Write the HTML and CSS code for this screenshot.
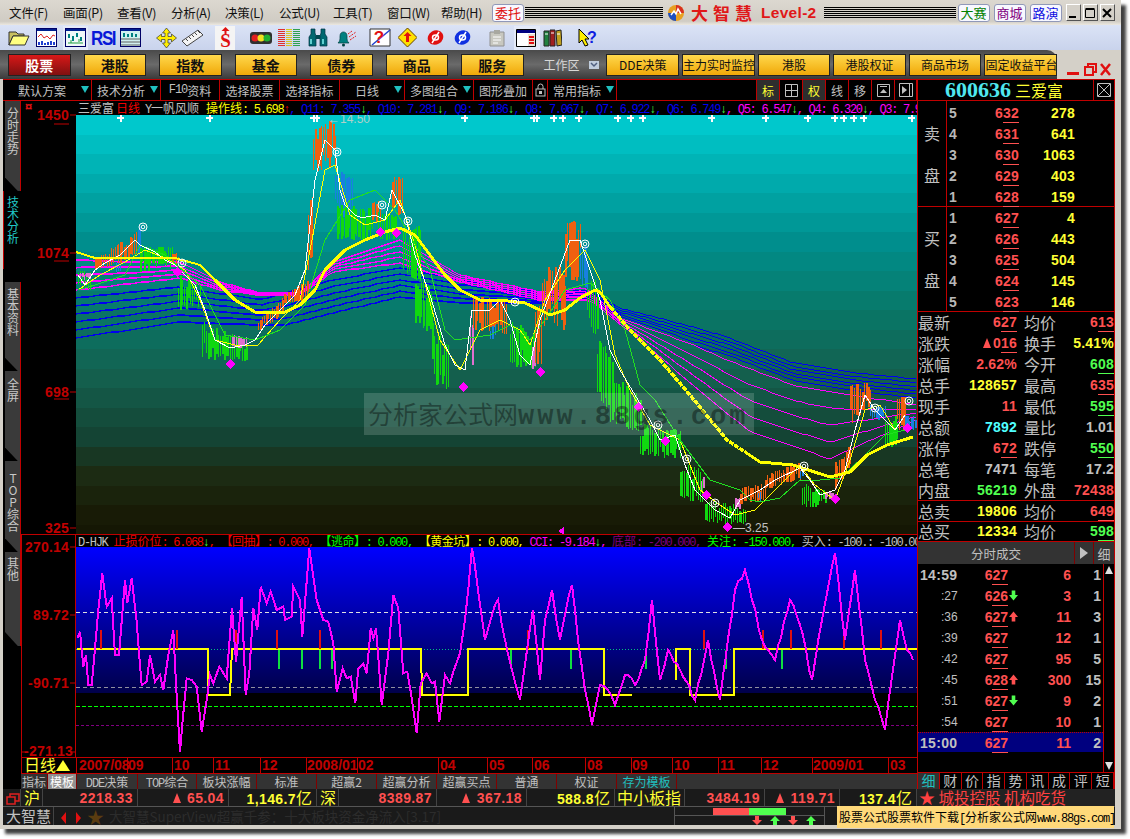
FILE: index.html
```html
<!DOCTYPE html>
<html lang="zh">
<head>
<meta charset="utf-8">
<title>大智慧 Level-2</title>
<link rel="stylesheet" href="styles.css">
</head>
<body>
<div class="window">
  <header class="menubar">
    <nav class="menus">
      <span>文件(F)</span><span>画面(P)</span><span>查看(V)</span><span>分析(A)</span><span>决策(L)</span><span>公式(U)</span><span>工具(T)</span><span>窗口(W)</span><span>帮助(H)</span>
    </nav>
    <button class="pill red-t entrust">委托</button>
    <div class="stripes s1"></div>
    <svg class="logo" width="18" height="18" viewBox="0 0 18 18"><circle cx="9" cy="9" r="8" fill="#e8a020"/><path d="M9 1a8 8 0 0 1 8 8H9z" fill="#d83020"/><path d="M1 9a8 8 0 0 0 8 8V9z" fill="#2050c0"/><path d="M4 11l3-4 2 3 2-5 3 5" fill="none" stroke="#fff" stroke-width="1.5"/></svg>
    <span class="brand">大智慧</span><span class="brand2">Level-2</span>
    <div class="stripes s2"></div>
    <button class="pill green-t">大赛</button><button class="pill purple-t">商城</button><button class="pill blue-t">路演</button>
    <div class="winbtns">
      <span class="wb"><svg width="12" height="12" viewBox="0 0 12 12"><rect x="2" y="9" width="7" height="2"/></svg></span>
      <span class="wb"><svg width="12" height="12" viewBox="0 0 12 12"><path d="M1.5 2.5h9v8h-9zM1.5 1.500h9" fill="none" stroke="#000"/></svg></span>
      <span class="wb"><svg width="12" height="12" viewBox="0 0 12 12"><path d="M2 2l8 8M10 2l-8 8" stroke="#000" stroke-width="2"/></svg></span>
    </div>
  </header>

  <div class="toolbar">
    <span class="t"><svg width="22" height="19" viewBox="0 0 22 19"><path d="M1 4h7l2 2h6v2H5L1 17z" fill="#c8c060" stroke="#333"/><path d="M5 8h16l-4 9H1z" fill="#ffff80" stroke="#333"/></svg></span>
    <span class="t"><svg width="21" height="19" viewBox="0 0 21 19"><rect x=".5" y=".5" width="20" height="18" fill="#fff" stroke="#006"/><rect x="1" y="1" width="19" height="2" fill="#002090"/><path d="M2 9l3-3 3 4 3-2 3 3 3-4 2 1" fill="none" stroke="#e02020"/><path d="M3 17v-3M6 17v-4M9 17v-2M12 17v-3M15 17v-4M18 17v-3" stroke="#2040d0" stroke-width="2"/></svg></span>
    <span class="t sel"><svg width="21" height="19" viewBox="0 0 21 19"><rect x=".5" y=".5" width="20" height="18" fill="#f0f8f8" stroke="#006"/><rect x="1" y="1" width="19" height="2" fill="#002090"/><path d="M4 6v4M8 8v5M12 5v4M16 9v4" stroke="#008080" stroke-width="2"/><path d="M3 15h15M6 12v3M14 11v3" stroke="#20a040"/></svg></span>
    <span class="t rsi">RSI</span>
    <span class="t"><svg width="21" height="19" viewBox="0 0 21 19"><rect x=".5" y=".5" width="20" height="18" fill="#d0f0f0" stroke="#006"/><rect x="1" y="1" width="19" height="2" fill="#002090"/><path d="M4 5v4M8 6v3M12 5v4M16 6v3" stroke="#008080" stroke-width="2"/><path d="M1 11h19M1 14h19M1 17h19" stroke="#606060"/></svg></span>
    <span class="t"><svg width="21" height="20" viewBox="0 0 21 20"><path d="M10.500 0l4 5h-2.500v3.500h3.500V6l5 4-5 4v-2.500h-3.500V15H14.500l-4 5-4-5h2.500v-3.500H5.500V14l-5-4 5-4v2.500h3.500V5H6.500z" fill="#ffee00" stroke="#333" stroke-width=".7"/></svg></span>
    <span class="t"><svg width="23" height="19" viewBox="0 0 23 19"><path d="M1 13L17 2l5 5L6 18z" fill="#f4f4f4" stroke="#444"/><path d="M5 11l2 2M8 9l2 2M11 7l2 2M14 5l2 2M17 3l2 2" stroke="#444"/></svg></span>
    <span class="t sel-s"><svg width="17" height="21" viewBox="0 0 17 21"><path d="M8.500 0l4 4h-3v3h-2V4h-3z" fill="#e01010"/><text x="8.500" y="20" text-anchor="middle" class="icon-s">S</text></svg></span>
    <span class="t"><svg width="22" height="14" viewBox="0 0 22 14"><rect x="0" y="1" width="22" height="12" rx="3" fill="#303030"/><circle cx="5" cy="7" r="3.500" fill="#e02020"/><circle cx="11" cy="7" r="3.500" fill="#f0e020"/><circle cx="17" cy="7" r="3.500" fill="#20b030"/></svg></span>
    <span class="t"><svg width="22" height="18" viewBox="0 0 22 18"><path d="M3.500 0v18" stroke="#e03030" stroke-width="7" stroke-dasharray="1 1"/><path d="M11 0v18" stroke="#d8c820" stroke-width="6" stroke-dasharray="1 1"/><path d="M18.500 0v18" stroke="#30a050" stroke-width="7" stroke-dasharray="1 1"/></svg></span>
    <span class="t"><svg width="20" height="19" viewBox="0 0 20 19"><path d="M3 1h4v4l1 3v10H1V9l2-3zM13 1h4v5l2 3v9h-7V8l1-3z" fill="#006870" stroke="#003040" stroke-width=".7"/><path d="M8 7h4v4H8z" fill="#004850"/><path d="M3 11v5M15 11v5" stroke="#60d0d0" stroke-width="2"/></svg></span>
    <span class="t"><svg width="21" height="19" viewBox="0 0 21 19"><path d="M1 15c2-2 2-3 2-7 0-3 2-4 3.500-4S10 5 10 8c0 4 0 5 2 7z" fill="#008080" stroke="#004040" stroke-width=".7"/><circle cx="6.500" cy="17" r="1.500" fill="#004040"/><path d="M11 6l4-3M12 9l7-5M13 12l6-4" stroke="#e02020" stroke-dasharray="2 1"/></svg></span>
    <span class="t"><svg width="22" height="19" viewBox="0 0 22 19"><path d="M1 1h20v17H1z" fill="#fff" stroke="#333"/><path d="M3 17L21 2" stroke="#2040d0" stroke-width="1.500"/><text x="10" y="15" text-anchor="middle" class="icon-q">?</text></svg></span>
    <span class="t"><svg width="19" height="19" viewBox="0 0 19 19"><path d="M9.500 0L19 9.500 9.500 19 0 9.500z" fill="#ffe000" stroke="#604000"/><path d="M9.500 4l4 4h-2.500v6H8V8H5.500z" fill="#e01010"/></svg></span>
    <span class="t"><svg width="17" height="17" viewBox="0 0 17 17"><ellipse cx="8.500" cy="8.500" rx="8" ry="7" transform="rotate(-30 8.500 8.500)" fill="#e01010"/><path d="M5 14L12 3" stroke="#fff" stroke-width="1.500"/><ellipse cx="8.500" cy="8.500" rx="3" ry="2.500" fill="none" stroke="#fff" stroke-width="1.500"/></svg></span>
    <span class="t"><svg width="17" height="17" viewBox="0 0 17 17"><ellipse cx="8.500" cy="8.500" rx="8" ry="7" transform="rotate(-30 8.500 8.500)" fill="#1030e0"/><path d="M5 14L12 3" stroke="#fff" stroke-width="1.500"/><ellipse cx="8.500" cy="8.500" rx="3" ry="2.500" fill="none" stroke="#fff" stroke-width="1.500"/></svg></span>
    <span class="t"><svg width="18" height="18" viewBox="0 0 18 18"><path d="M2 3h14v14H2z" fill="#c8c8c0" stroke="#909090"/><path d="M6 1h6v4H6z" fill="#a8a8a0"/><path d="M5 8h8M5 11h8M5 14h5" stroke="#fff"/></svg></span>
    <span class="t sel"><svg width="20" height="18" viewBox="0 0 20 18"><path d="M.5.5h19v17H.5z" fill="#fff" stroke="#000"/><rect x="1" y="1" width="18" height="3" fill="#000080"/><rect x="12" y="5" width="7" height="12" fill="#e8e0d0"/><path d="M13 8h5M13 11h5M13 14h5" stroke="#e01010" stroke-width="2"/></svg></span>
    <span class="t"><svg width="19" height="19" viewBox="0 0 19 19"><path d="M1 3h5v15H1z" fill="#208040" stroke="#222"/><path d="M7 2h5v16H7z" fill="#a02020" stroke="#222"/><path d="M13 3l5-1 1 15-5 1z" fill="#c0a020" stroke="#222"/><path d="M2 6h3M8 5h3M14 6h3" stroke="#fff"/></svg></span>
    <span class="t help"><svg width="20" height="20" viewBox="0 0 20 20"><path d="M1 1l0 14 3-3 3 6 3-1-3-6h4z" fill="#ffee00" stroke="#000"/><text x="14" y="15" text-anchor="middle" class="icon-h">?</text></svg></span>
  </div>

  <div class="navbar">
    <div class="navmain">
      <button class="nb active">股票</button><button class="nb">港股</button><button class="nb">指数</button><button class="nb">基金</button><button class="nb">债券</button><button class="nb">商品</button><button class="nb">服务</button>
    </div>
    <span class="wsp">工作区</span>
    <span class="wspbtn"><svg width="10" height="8" viewBox="0 0 10 8"><path d="M0 0h10v8H0z" fill="#c0ccdc"/><path d="M2 2l3 3 3-3" fill="none" stroke="#506080" stroke-width="1.500"/></svg></span>
    <div class="navwork">
      <button class="wb2">DDE决策</button><button class="wb2">主力实时监控</button><button class="wb2">港股</button><button class="wb2">港股权证</button><button class="wb2">商品市场</button><button class="wb2">固定收益平台</button>
    </div>
  </div>
  <div class="navctrl" aria-hidden="true">
    <svg width="46" height="18" viewBox="0 0 46 18"><rect x="1" y="11" width="12" height="3" fill="#e01010"/><path d="M19 6h8v8h-8zM22 6V3h8v8h-3" fill="none" stroke="#e01010" stroke-width="2"/><path d="M35 3l9 11M44 3l-9 11" stroke="#e01010" stroke-width="2.500"/></svg>
  </div>

  <div class="workspace">
    <section class="chartcol">
      <div class="toolrow">
        <span class="c w89 hastri">默认方案<em class="tri"></em></span>
        <span class="c w69 hastri">技术分析<em class="tri"></em></span>
        <span class="c w59"><span class="mono">F10</span>资料</span>
        <span class="c w60">选择股票</span>
        <span class="c w60">选择指标</span>
        <span class="c w65 hastri">日线<em class="tri"></em></span>
        <span class="c w69 hastri">多图组合<em class="tri"></em></span>
        <span class="c w59">图形叠加</span>
        <span class="c w15"><svg width="11" height="14" viewBox="0 0 11 14"><path d="M3 6V3.500a2.500 2.500 0 0 1 5 0V6" fill="none" stroke="#c0c0c0"/><rect x="1" y="6" width="9" height="7" fill="none" stroke="#c0c0c0"/><rect x="4" y="8" width="3" height="3" fill="#c0c0c0"/></svg></span>
        <span class="c w69 hastri">常用指标<em class="tri"></em></span>
        <span class="c fill"></span>
        <span class="c w23 on">标</span>
        <span class="c w23"><svg width="13" height="13" viewBox="0 0 13 13"><path d="M.5.5h12v12H.5zM6.500 1v11M1 6.500h11" fill="none" stroke="#c0c0c0"/></svg></span>
        <span class="c w23 on">权</span>
        <span class="c w23">线</span>
        <span class="c w23">移</span>
        <span class="c w23"><svg width="13" height="13" viewBox="0 0 13 13"><path d="M.5.5h12v12H.5z" fill="none" stroke="#c0c0c0"/><path d="M3 2.500h7" stroke="#c0c0c0"/><path d="M6.500 5l3.500 4H3z" fill="#c0c0c0"/></svg></span>
        <span class="c w22"><svg width="14" height="14" viewBox="0 0 14 14"><path d="M.5.5h13v13H.5z" fill="none" stroke="#c0c0c0"/><path d="M3 3l5 4-5 4z" fill="#c0c0c0"/><path d="M10.500 1v12" stroke="#c0c0c0"/></svg></span>
      </div>

      <div class="chartbody">
        <aside class="vtabs">
          <span class="vt h90">分时走势</span>
          <span class="vt h91 sel">技术分析</span>
          <span class="vt h89">基本资料</span>
          <span class="vt h90 full">全屏</span>
          <span class="vt h91 top">TOP综合</span>
          <span class="vt h94 other">其他</span>
        </aside>
        <div class="stack">
          <div class="panel price">
            <svg class="axis" viewBox="21 101 55 433">
              <text x="25" y="111" class="cur">¤</text>
              <text x="69" y="120" class="ax">1450</text><path d="M54 124h15M70 115h6" class="axl"/>
              <text x="69" y="258" class="ax">1074</text><path d="M54 261h15M70 253h6" class="axl"/>
              <text x="69" y="397" class="ax">698</text><path d="M54 399h15M70 392h6" class="axl"/>
              <text x="69" y="533" class="ax">325</text><path d="M70 528h6" class="axl"/>
            </svg>
            <div class="plot pp">
              <div class="head">
                <span class="gray cn">三爱富</span><span class="red cn ml2">日线</span><span class="gray lat ml5">Y</span><span class="gray cn">一帆风顺</span><span class="yel ml7"><span class="cn">操作线</span><span class="lat">: 5.698</span></span><span class="red lat">↑</span><span class="blu lat">, Q11: 7.355</span><span class="grn lat">↓</span><span class="blu lat">, Q10: 7.281</span><span class="grn lat">↓</span><span class="blu lat">, Q9: 7.186</span><span class="grn lat">↓</span><span class="blu lat">, Q8: 7.067</span><span class="grn lat">↓</span><span class="blu lat">, Q7: 6.922</span><span class="grn lat">↓</span><span class="blu lat">, Q6: 6.749</span><span class="grn lat">↓</span><span class="mag lat">, Q5: 6.547</span><span class="grn lat">↓</span><span class="mag lat">, Q4: 6.320</span><span class="grn lat">↓</span><span class="mag lat">, Q3: 7.9</span>
              </div>
              <svg id="price" class="chart" viewBox="76 115 841 419"></svg>
              <div class="watermark">分析家公式网<span class="wml">www.88gs.com</span></div>
            </div>
          </div>
          <div class="panel ind">
            <svg class="axis" viewBox="21 534 55 223">
              <path d="M21.500 534v223M21 534.500h55" class="axl"/>
              <text x="69" y="552" class="ax">270.14</text><path d="M70 547h6" class="axl"/>
              <text x="69" y="620" class="ax">89.72</text><path d="M70 615h6" class="axl"/>
              <text x="69" y="688" class="ax">-90.71</text><path d="M70 683h6" class="axl"/>
              <text x="73" y="756" class="ax">-271.13</text><path d="M21 752h4M70 752h6" class="axl"/>
            </svg>
            <div class="plot">
              <div class="head h2">
                <span class="gray lat">D-HJK </span><span class="red"><span class="cn">止损价位</span><span class="lat">: 6.068</span></span><span class="grn lat">↓</span><span class="red lat">, </span><span class="red cn brk">【回抽】</span><span class="red lat">: 0.000, </span><span class="grn2 cn brk">【逃命】</span><span class="grn2 lat">: 0.000, </span><span class="yel cn brk">【黄金坑】</span><span class="yel lat">: 0.000, </span><span class="mag lat">CCI: -9.184</span><span class="grn lat">↓</span><span class="mag lat">, </span><span class="pur"><span class="cn">底部</span><span class="lat">: -200.000, </span></span><span class="grn2"><span class="cn">关注</span><span class="lat">: -150.000, </span></span><span class="gray"><span class="cn">买入</span><span class="lat">: -100.: -100.000</span></span>
              </div>
              <svg id="ind" class="chart" viewBox="76 547 841 210"></svg>
            </div>
          </div>
          <svg class="timeaxis" viewBox="21 757 896 16">
            <text x="24" y="771" class="dayl">日线</text><path d="M56 771l7-11 7 11z" fill="#ffff33"/>
            <path class="axl" d="M21 757.500h896M21.500 757v16M76.500 757v16M127.500 757v16M172.500 757v16M213.500 757v16M260.500 757v16M306.500 757v16M357.500 757v16M438.500 757v16M487.500 757v16M532.500 757v16M585.500 757v16M631.500 757v16M672.500 757v16M718.500 757v16M761.500 757v16M812.500 757v16M888.500 757v16"/>
            <text x="79" y="770" class="tx">2007/08</text><text x="128" y="770" class="tx">09</text><text x="174" y="770" class="tx">10</text><text x="215" y="770" class="tx">11</text><text x="262" y="770" class="tx">12</text><text x="307" y="770" class="tx">2008/01</text><text x="358" y="770" class="tx">02</text><text x="440" y="770" class="tx">04</text><text x="489" y="770" class="tx">05</text><text x="534" y="770" class="tx">06</text><text x="587" y="770" class="tx">08</text><text x="632" y="770" class="tx">09</text><text x="674" y="770" class="tx">10</text><text x="720" y="770" class="tx">11</text><text x="763" y="770" class="tx">12</text><text x="813" y="770" class="tx">2009/01</text><text x="890" y="770" class="tx">03</text>
          </svg>
          <div class="btabs">
            <span class="bt w27">指标</span><span class="bt w29 act">模板</span><span class="bt w61"><span class="mono">DDE</span>决策</span><span class="bt w59"><span class="mono">TOP</span>综合</span><span class="bt w60">板块涨幅</span><span class="bt w60">标准</span><span class="bt w60">超赢2</span><span class="bt w60">超赢分析</span><span class="bt w60">超赢买点</span><span class="bt w60">普通</span><span class="bt w60">权证</span><span class="bt w60 cyan">存为模板</span><span class="bt rest"></span>
          </div>
        </div>
      </div>
    </section>

    <aside class="side">
      <div class="quotehead"><span class="code">600636</span><span class="sname">三爱富</span><span class="closebox"><svg width="14" height="14" viewBox="0 0 14 14"><path d="M.5.5h13v13H.5zM1 1l12 12M13 1L1 13" fill="none" stroke="#c0c0c0"/></svg></span></div>
      <div class="book sell">
        <div class="blabel"><span>卖</span><span>盘</span></div>
        <div class="brows">
          <div class="br"><span class="idx">5</span><span class="r">6<u>32</u></span><span class="y">278</span></div>
          <div class="br"><span class="idx">4</span><span class="r">6<u>31</u></span><span class="y">641</span></div>
          <div class="br"><span class="idx">3</span><span class="r">6<u>30</u></span><span class="y">1063</span></div>
          <div class="br"><span class="idx">2</span><span class="r">6<u>29</u></span><span class="y">403</span></div>
          <div class="br"><span class="idx">1</span><span class="r">6<u>28</u></span><span class="y">159</span></div>
        </div>
      </div>
      <div class="book buy">
        <div class="blabel"><span>买</span><span>盘</span></div>
        <div class="brows">
          <div class="br"><span class="idx">1</span><span class="r">6<u>27</u></span><span class="y">4</span></div>
          <div class="br"><span class="idx">2</span><span class="r">6<u>26</u></span><span class="y">443</span></div>
          <div class="br"><span class="idx">3</span><span class="r">6<u>25</u></span><span class="y">504</span></div>
          <div class="br"><span class="idx">4</span><span class="r">6<u>24</u></span><span class="y">145</span></div>
          <div class="br"><span class="idx">5</span><span class="r">6<u>23</u></span><span class="y">146</span></div>
        </div>
      </div>
      <div class="stats">
        <div class="st"><label>最新</label><span class="r">6<u>27</u></span><label>均价</label><span class="r">6<u>13</u></span></div>
        <div class="st"><label>涨跌</label><span class="r"><span class="upt"></span>0<u>16</u></span><label>换手</label><span class="y">5.41%</span></div>
        <div class="st"><label>涨幅</label><span class="r">2.62%</span><label>今开</label><span class="g">6<u>08</u></span></div>
        <div class="st"><label>总手</label><span class="y">128657</span><label>最高</label><span class="r">6<u>35</u></span></div>
        <div class="st"><label>现手</label><span class="r">11</span><label>最低</label><span class="g">5<u>95</u></span></div>
        <div class="st"><label>总额</label><span class="cy">7892</span><label>量比</label><span class="w">1.01</span></div>
        <div class="st"><label>涨停</label><span class="r">6<u>72</u></span><label>跌停</label><span class="g">5<u>50</u></span></div>
        <div class="st"><label>总笔</label><span class="w">7471</span><label>每笔</label><span class="w">17.2</span></div>
        <div class="st"><label>内盘</label><span class="g">56219</span><label>外盘</label><span class="r">72438</span></div>
      </div>
      <div class="st tot"><label>总卖</label><span class="y">19806</span><label>均价</label><span class="r">6<u>49</u></span></div>
      <div class="st tot t2"><label>总买</label><span class="y">12334</span><label>均价</label><span class="g">5<u>98</u></span></div>
      <div class="tickhead"><span class="thname">分时成交</span><span class="tharrow"><svg width="8" height="12" viewBox="0 0 8 12"><path d="M0 0l8 6-8 6z" fill="#c0c0c0"/></svg></span><span class="thd">细</span></div>
      <div class="tickwrap">
        <div class="ticks">
          <div class="tk"><span class="tm big">14:59</span><span class="r">6<u>27</u></span><span class="ar"></span><span class="r qty">6</span><span class="w n">1</span></div>
          <div class="tk"><span class="tm">:27</span><span class="r">6<u>26</u></span><span class="ar dn"><svg width="10" height="11" viewBox="0 0 10 11"><path d="M5 11L0 5h3V0h4v5h3z"/></svg></span><span class="r qty">3</span><span class="w n">1</span></div>
          <div class="tk"><span class="tm">:36</span><span class="r">6<u>27</u></span><span class="ar up"><svg width="10" height="11" viewBox="0 0 10 11"><path d="M5 0l5 6H7v5H3V6H0z"/></svg></span><span class="r qty">11</span><span class="w n">3</span></div>
          <div class="tk"><span class="tm">:39</span><span class="r">6<u>27</u></span><span class="ar"></span><span class="r qty">12</span><span class="w n">1</span></div>
          <div class="tk"><span class="tm">:42</span><span class="r">6<u>27</u></span><span class="ar"></span><span class="r qty">95</span><span class="w n">5</span></div>
          <div class="tk"><span class="tm">:45</span><span class="r">6<u>28</u></span><span class="ar up"><svg width="10" height="11" viewBox="0 0 10 11"><path d="M5 0l5 6H7v5H3V6H0z"/></svg></span><span class="r qty">300</span><span class="w n">15</span></div>
          <div class="tk"><span class="tm">:51</span><span class="r">6<u>27</u></span><span class="ar dn"><svg width="10" height="11" viewBox="0 0 10 11"><path d="M5 11L0 5h3V0h4v5h3z"/></svg></span><span class="r qty">9</span><span class="w n">2</span></div>
          <div class="tk"><span class="tm">:54</span><span class="r">6<u>27</u></span><span class="ar"></span><span class="r qty">10</span><span class="w n">1</span></div>
          <div class="tk hi"><span class="tm big">15:00</span><span class="r">6<u>27</u></span><span class="ar"></span><span class="r qty">11</span><span class="w n">2</span></div>
        </div>
        <div class="scroll"><span class="sb up1"></span><span class="sb dn1"></span></div>
      </div>
      <div class="sidetabs"><span class="stb on">细</span><span class="stb">财</span><span class="stb">价</span><span class="stb">指</span><span class="stb">势</span><span class="stb">讯</span><span class="stb">成</span><span class="stb">评</span><span class="stb">短</span></div>
    </aside>
  </div>

  <div class="market">
    <span class="mk m18"><svg width="14" height="12" viewBox="0 0 14 12"><path d="M1 4h8v7H1zM4 4V1h9v7H9" fill="none" stroke="#e02020" stroke-width="1.500"/></svg></span>
    <span class="mk m22 cnl">沪</span>
    <span class="mk m95 r">2218.33</span>
    <span class="mk m91 r"><span class="upt"></span> 65.04</span>
    <span class="mk m88 y">1,146.7<span class="cnl">亿</span></span>
    <span class="mk m22 cnl">深</span>
    <span class="mk m98 r">8389.87</span>
    <span class="mk m90 r"><span class="upt"></span> 367.18</span>
    <span class="mk m88 y">588.8<span class="cnl">亿</span></span>
    <span class="mk m70 cnl">中小板指</span>
    <span class="mk m80 r">3484.19</span>
    <span class="mk m75 r"><span class="upt"></span> 119.71</span>
    <span class="mk m77 y">137.4<span class="cnl">亿</span></span>
    <span class="mk hot"><span class="hstar">★</span> 城投控股 机构吃货</span>
  </div>
  <div class="ticker">
    <span class="dzh">大智慧</span>
    <span class="tarrows"><svg width="24" height="12" viewBox="0 0 24 12"><path d="M7 0L2 6l5 6zM17 0l5 6-5 6z" fill="#e01010"/></svg></span>
    <span class="dstar">★</span>
    <span class="news">大智慧SuperView超赢千参：十大板块资金净流入[3.17]</span>
    <div class="flow">
      <div class="fbar"><span class="fr"></span><span class="fg"></span></div>
      <svg class="farrows" width="70" height="9" viewBox="0 0 70 9"><path d="M5 9L0 4h3V0h4v4h3z" fill="#ff5050"/><path d="M23 0l5 5h-3v4h-4V5h-3z" fill="#50ff50"/><path d="M41 9l-5-5h3V0h4v4h3z" fill="#ff5050"/><path d="M59 0l5 5h-3v4h-4V5h-3z" fill="#50ff50"/></svg>
    </div>
    <div class="tip">股票公式股票软件下载<span class="lat">[</span>分析家公式网<span class="lat">www.88gs.com]</span></div>
  </div>
</div>
<script src="chart.js"></script>
</body>
</html>
```
FILE: styles.css
```css
* { box-sizing: border-box; }
html, body { margin: 0; padding: 0; background: #fff; }
body { width: 1130px; height: 839px; overflow: hidden; font-family: "Noto Sans CJK SC", sans-serif; }
button { font: inherit; padding: 0; cursor: default; }
u { text-decoration: none; border-bottom: 1px solid currentColor; padding-bottom: 1px; }

.window { position: relative; width: 1121px; height: 829px; background: #d4d0c8; padding: 0 6px 4px 3px; box-shadow: 5px 5px 3px rgba(0,0,0,.75); }

/* title bar */
.menubar { display: flex; align-items: center; height: 25px; margin: 0 -6px 0 -3px; background: linear-gradient(#dcd8d0, #d0ccc4 85%, #ece8e0); }
.menus { display: flex; gap: 13px; padding-left: 9px; width: 492px; font-size: 12.5px; color: #111; white-space: nowrap; }
.menus span { width: 41px; letter-spacing: -.3px; }
.pill { height: 18px; width: 32px; margin-right: 4px; border: 1px solid #9098b8; border-radius: 3px; background: #f8f8ff; font-size: 13px; line-height: 15px; }
.entrust { margin-right: 0; }
.red-t { color: #e01010; }
.green-t { color: #008000; }
.purple-t { color: #800080; }
.blue-t { color: #1010e0; }
.stripes { height: 12px; background: repeating-linear-gradient(#000 0 1px, transparent 1px 2px); }
.s1 { width: 138px; margin-left: 1px; }
.s2 { width: 132px; margin: 0 2px 0 7px; }
.logo { margin: 0 6px 0 4px; }
.brand { color: #e01818; font-size: 17px; font-weight: 700; letter-spacing: 5px; width: 70px; white-space: nowrap; }
.brand2 { color: #e01818; font: 700 15.500px/1 "Liberation Sans", sans-serif; letter-spacing: .3px; }
.winbtns { display: flex; gap: 2px; }
.wb { display: flex; align-items: center; justify-content: center; width: 15px; height: 17px; background: #d4d0c8; border: 1px solid; border-color: #fff #555 #555 #fff; }

/* icon toolbar */
.toolbar { display: grid; grid-template-columns: 28px 29px 26px 29px 36px 25px 36px 33px 28px 30px 29px 32px 29px 29px 27px 34px 28px 27px 35px 20px; align-items: center; height: 25px; margin: 0 -6px 0 -3px; padding-left: 8px; background: linear-gradient(#dbe3f6, #c9d3ec); }
.t { display: flex; align-items: center; height: 24px; }
.sel { background: #e4eaf8; margin-left: -2px; padding-left: 2px; margin-right: 3px; }
.sel-s { background: #f4f4f4; justify-content: center; width: 20px; margin-left: -2px; }
.rsi { color: #0818d8; font: 700 17px/1 "Liberation Sans", sans-serif; letter-spacing: -1.400px; transform: scaleY(1.15); }
.icon-s { font: 700 19px "Liberation Serif", serif; fill: #e01010; }
.icon-q { font: 700 17px "Liberation Sans", sans-serif; fill: #e01010; }
.icon-h { font: 700 16px "Liberation Sans", sans-serif; fill: #1020e0; }

/* navigation */
.navbar { display: flex; align-items: center; width: 1057px; height: 29px; margin-left: -3px; padding-left: 8px; background: linear-gradient(#4a4a4a, #6a6a6a 50%, #3a3a3a); border-top-right-radius: 10px; }
.navmain { display: flex; gap: 13px; }
.nb { width: 62.500px; height: 22px; border: 1px solid #222; background: linear-gradient(#ffd84c, #f0a808); color: #111; font-size: 14px; font-weight: 700; }
.nb.active { background: linear-gradient(#d81818, #801010); color: #fff; }
.wsp { margin-left: 20px; color: #d8d8d8; font-size: 12px; width: 46px; white-space: nowrap; }
.wspbtn { width: 17px; display: flex; }
.navwork { display: flex; gap: 3px; }
.wb2 { width: 72.600px; height: 22px; border: 1px solid #222; background: linear-gradient(#ffd84c, #f0a808); color: #111; font-size: 12px; white-space: nowrap; overflow: hidden; }
.navctrl { position: absolute; left: 1066px; top: 60px; }

/* main area */
.workspace { display: flex; height: 710px; background: #000; }
.chartcol { width: 914px; display: flex; flex-direction: column; }
.toolrow { display: flex; height: 22px; border-top: 1px solid #c00000; border-bottom: 1px solid #c00000; font-size: 12px; color: #c0c0c0; }
.c { position: relative; display: flex; align-items: center; justify-content: center; height: 20px; border-right: 1px solid #c00000; white-space: nowrap; }
.c.fill { flex: 1; }
.hastri { padding-right: 10px; }
.w89 { width: 89px; } .w69 { width: 69px; } .w59 { width: 59px; } .w60 { width: 60px; } .w65 { width: 65px; } .w15 { width: 15px; } .w23 { width: 23px; } .w22 { width: 22px; }
.c.on { background: #2e2e2e; color: #ffff33; }
.tri { position: absolute; right: 2px; top: 6px; border: 4px solid transparent; border-top: 7px solid #20c0c0; border-bottom: 0; }
.mono { font-family: "Liberation Mono", monospace; letter-spacing: -1px; }
.chartbody { display: flex; height: 688px; }
.vtabs { width: 18px; padding-left: 2px; display: flex; flex-direction: column; }
.vt { display: flex; width: 16px; padding-top: 6px; justify-content: flex-start; align-items: center; writing-mode: vertical-rl; text-orientation: upright; font-size: 12px; line-height: 14px; color: #c8c8c8; background: #3a3a3a; border-right: 1px solid #c00000; clip-path: polygon(0 0, 100% 0, 100% 100%, 80% 100%, 0 85%); }
.vt.sel { background: #000; color: #20c8c8; border-left: 1px solid #c00000; border-right: 0; padding-top: 5px; }
.vt.full { padding-top: 7px; }
.vt.top { padding-top: 11px; }
.vt.other { padding-top: 5px; }
.h89 { height: 89px; } .h90 { height: 90px; } .h91 { height: 91px; } .h94 { height: 94px; }
.stack { flex: 1; min-width: 0; display: flex; flex-direction: column; }
.panel { display: flex; }
.price { height: 433px; }
.ind { height: 223px; }
.axis { flex: none; width: 55px; display: block; }
.ax { font: 700 14px "Liberation Sans", sans-serif; fill: #c00000; text-anchor: end; letter-spacing: .2px; }
.axl { stroke: #c00000; fill: none; }
.cur { font: 700 13px "Liberation Sans", sans-serif; fill: #e01010; }
.plot { position: relative; flex: 1; min-width: 0; display: flex; flex-direction: column; border-left: 1px solid #c00000; margin-left: -1px; }
.plot.pp { border-left: 0; margin-left: 0; }
.head { height: 14px; padding-left: 2px; overflow: hidden; white-space: nowrap; font: 12px/14px "Liberation Mono", "Noto Sans CJK SC", monospace; color: #c0c0c0; background: #000; }
.h2 { height: 13px; border-top: 1px solid #c00000; line-height: 12px; }
.cn { font-family: "Noto Sans CJK SC", sans-serif; }
.lat { font-family: "Liberation Mono", monospace; letter-spacing: -1.200px; }
.head .lat { letter-spacing: -1.300px; }
.brk { letter-spacing: -.5px; }
.ml2 { margin-left: 2px; } .ml5 { margin-left: 5px; } .ml7 { margin-left: 7px; }
.gray { color: #c0c0c0; } .red { color: #f00000; } .yel { color: #ffff00; } .blu { color: #0000f0; } .grn { color: #40ff40; } .grn2 { color: #00ff00; } .mag { color: #ff00ff; } .pur { color: #800080; }
.chart { display: block; flex: 1; min-height: 0; width: 841px; shape-rendering: crispEdges; }
.watermark { position: absolute; left: 288px; top: 292px; width: 390px; height: 42px; padding-left: 4px; background: rgba(255,255,255,.16); color: rgba(0,0,0,.38); font-size: 25px; line-height: 40px; white-space: nowrap; overflow: hidden; }
.wml { font: 700 27px/40px "Liberation Mono", monospace; letter-spacing: 3px; }
.lbl { font: 12px "Liberation Sans", sans-serif; }
.timeaxis { display: block; width: 896px; height: 16px; flex: none; }
.dayl { font-size: 16px; fill: #ffff33; }
.tx { font: 700 14px "Liberation Sans", sans-serif; fill: #c00000; }
.btabs { display: flex; height: 16px; background: #333; border-top: 1px solid #c00000; font-size: 12px; line-height: 15px; color: #c0c0c0; }
.bt { text-align: center; white-space: nowrap; border-right: 1px solid #800000; }
.w27 { width: 27px; } .w29 { width: 29px; } .w61 { width: 61px; }
.bt.act { background: #909090; color: #fff; }
.bt.cyan { color: #20c0c0; }
.bt.rest { flex: 1; border: 0; }

/* right panel */
.side { flex: 1; min-width: 0; display: flex; flex-direction: column; border-left: 1px solid #c00000; border-right: 1px solid #c00000; font-family: "Liberation Sans", "Noto Sans CJK SC", sans-serif; font-size: 14px; font-weight: 700; }
.r { color: #ff5050; } .y { color: #ffff33; } .g { color: #50ff50; } .cy { color: #50ffff; } .w { color: #c0c0c0; }
.quotehead { display: flex; align-items: center; height: 22px; padding-left: 27px; border-top: 1px solid #c00000; border-bottom: 1px solid #c00000; flex: none; }
.code { font: 700 22px/20px "Liberation Serif", serif; color: #50e8f0; width: 70px; }
.sname { font: 400 16px/20px "Noto Sans CJK SC", sans-serif; color: #ffff33; letter-spacing: 0; }
.closebox { margin-left: auto; display: flex; align-items: center; justify-content: center; width: 21px; height: 20px; border-left: 1px solid #c00000; }
.book { display: flex; border-bottom: 1px solid #c00000; flex: none; }
.sell { height: 106px; }
.sell .brows { padding-top: 1px; }
.buy { height: 105px; }
.blabel { width: 29px; display: flex; flex-direction: column; align-items: center; justify-content: center; gap: 26px; border-right: 1px solid #c00000; font: 400 16px/16px "Noto Sans CJK SC", sans-serif; color: #c0c0c0; }
.brows { flex: 1; }
.br { display: grid; grid-template-columns: 20px 50px 56px; align-items: center; height: 21px; padding-left: 2px; letter-spacing: .2px; }
.br span { text-align: right; }
.br .idx { color: #b8b8b8; text-align: left; }
.stats { height: 189px; border-bottom: 1px solid #c00000; flex: none; }
.st { display: grid; grid-template-columns: 32px 67px 39px 1fr; align-items: center; height: 21px; padding-bottom: 1px; letter-spacing: .2px; white-space: nowrap; flex: none; }
.st > span { text-align: right; }
.st label { font: 400 16px/18px "Noto Sans CJK SC", sans-serif; color: #c0c0c0; letter-spacing: 0; }
.st > label:nth-of-type(2) { padding-left: 7px; }
.tot { border-bottom: 1px solid #c00000; }
.tot.t2 { height: 20px; }
.upt { display: inline-block; width: 0; height: 0; margin-right: 2px; border: 4.500px solid transparent; border-top: 0; border-bottom: 10px solid #ff5050; }
.tickhead { display: flex; align-items: center; height: 22px; background: #333; color: #c0c0c0; font: 400 12.500px "Noto Sans CJK SC", sans-serif; flex: none; }
.thname { width: 156px; text-align: center; }
.tharrow { width: 20px; height: 22px; display: flex; align-items: center; justify-content: center; border-left: 1px solid #800000; border-right: 1px solid #800000; }
.thd { flex: 1; text-align: center; font-size: 13px; }
.tickwrap { flex: 1; display: flex; min-height: 0; }
.ticks { width: 187px; border-right: 1px solid #c00000; }
.tk { display: grid; grid-template-columns: 56px 32px 10px 53px 30px; align-items: center; height: 21px; padding-left: 2px; }
.tk > span { text-align: right; }
.tk .tm { text-align: left; color: #c0c0c0; font: 400 12px "Liberation Sans", sans-serif; padding-left: 21px; }
.tk .tm.big { font: 700 14px "Liberation Sans", sans-serif; padding-left: 0; letter-spacing: .3px; }
.tk .ar { display: flex; padding-left: 1px; }
.ar.up { fill: #ff5050; }
.ar.dn { fill: #50ff50; }
.tk.hi { background: #00007f; border-top: 1px dotted #c00000; height: 20px; }
.scroll { flex: 1; display: flex; flex-direction: column; justify-content: space-between; padding: 1px 0; }
.sb { width: 0; height: 0; margin: 1px 1px; border: 4px solid transparent; }
.up1 { border-top: 0; border-bottom: 8px solid #e0e0e0; }
.dn1 { border-bottom: 0; border-top: 8px solid #e0e0e0; }
.sidetabs { display: flex; height: 17px; border-top: 1px solid #c00000; flex: none; }
.stb { flex: 1; text-align: center; font: 400 14px/15px "Noto Sans CJK SC", sans-serif; color: #c0c0c0; border-right: 1px solid #c00000; }
.stb.on { background: #333; color: #20c0c0; }

/* bottom rows */
.market { display: flex; align-items: center; height: 18px; background: #1a1a1a; font: 700 14px/18px "Liberation Sans", sans-serif; border-bottom: 1px solid #555; letter-spacing: .4px; }
.mk { flex: none; height: 17px; text-align: right; padding-right: 4px; border-right: 1px solid #444; white-space: nowrap; }
.cnl { font: 400 16px/17px "Noto Sans CJK SC", sans-serif; color: #ffff33; letter-spacing: 0; }
.m18 { width: 18px; padding: 2px 0 0 2px; }
.m22 { width: 22px; padding-right: 2px; }
.m95 { width: 95px; } .m91 { width: 91px; } .m88 { width: 88px; } .m98 { width: 98px; } .m90 { width: 90px; } .m70 { width: 70px; padding-right: 3px; } .m80 { width: 80px; } .m75 { width: 75px; } .m77 { width: 77px; }
.hot { flex: 1; text-align: left; padding-left: 2px; border: 0; font: 400 15.500px/17px "Noto Sans CJK SC", sans-serif; color: #ff4040; background: #222; letter-spacing: 0; }
.hstar { font-size: 16px; }
.ticker { position: relative; display: flex; align-items: center; height: 18px; background: #1a1a1a; color: #333; font-size: 14px; }
.dzh { width: 51px; padding-left: 3px; color: #c0c0c0; font-size: 15px; border-right: 1px solid #444; height: 18px; line-height: 18px; white-space: nowrap; }
.tarrows { padding: 3px 0 0 5px; display: flex; }
.dstar { color: #5a3c10; font-size: 17px; margin-left: 4px; width: 22px; }
.news { font-size: 13.500px; width: 565px; white-space: nowrap; color: #2c2c2c; }
.flow { position: relative; width: 151px; height: 18px; border-left: 1px solid #555; border-right: 1px solid #555; }
.flow::before { content: ""; position: absolute; left: 0; right: 0; top: 8px; border-top: 1px solid #555; }
.fbar { position: absolute; left: 38px; top: 1px; display: flex; height: 7px; }
.fr { width: 36px; background: #ff5050; }
.fg { width: 37px; background: #50ff50; }
.farrows { position: absolute; left: 77px; top: 9px; }
.tip { position: absolute; right: 1px; top: -1px; width: 277px; height: 22px; padding-left: 2px; background: #ffd97a; color: #000; font: 400 12px/21px "Noto Sans CJK SC", sans-serif; white-space: nowrap; overflow: hidden; }
```
FILE: chart.js
```js
(function () {
  var NS = "http://www.w3.org/2000/svg";
  function el(svg, name, attrs, text) {
    var e = document.createElementNS(NS, name);
    for (var k in attrs) e.setAttribute(k, attrs[k]);
    if (text) e.textContent = text;
    svg.appendChild(e);
    return e;
  }
  var seed = 20090317;
  function rnd() { seed = (seed * 16807) % 2147483647; return seed / 2147483647; }
  function lerp(a, b, t) { return a + (b - a) * t; }
  function curve(pts, x) {
    if (x <= pts[0][0]) return pts[0][1];
    for (var i = 1; i < pts.length; i++) {
      if (x <= pts[i][0]) return lerp(pts[i - 1][1], pts[i][1], (x - pts[i - 1][0]) / (pts[i][0] - pts[i - 1][0]));
    }
    return pts[pts.length - 1][1];
  }
  function poly(svg, pts, color, w, dash) {
    var a = { points: pts.map(function (p) { return p[0].toFixed(1) + "," + p[1].toFixed(1); }).join(" "), fill: "none", stroke: color, "stroke-width": w };
    if (dash) a["stroke-dasharray"] = dash;
    el(svg, "polyline", a);
  }

  /* ---------- price panel ---------- */
  var p = document.getElementById("price");
  var stops = [[115, [0, 200, 204]], [173, [0, 170, 172]], [233, [0, 142, 140]], [300, [8, 120, 104]], [367, [20, 96, 78]], [427, [20, 68, 52]], [463, [28, 44, 20]], [502, [24, 28, 6]], [528, [20, 22, 4]]];
  for (var y = 115; y < 528; y += 19.5) {
    var c = [0, 1, 2].map(function (i) { return Math.round(curve(stops.map(function (s) { return [s[0], s[1][i]]; }), y)); });
    el(p, "rect", { x: 76, y: y, width: 841, height: 19.6, fill: "rgb(" + c.join(",") + ")" });
  }

  var bt = [[76, 298], [180, 287], [260, 300], [333, 280], [400, 268], [460, 280], [540, 292], [585, 288], [620, 308], [693, 327], [727, 337], [793, 363], [850, 372], [917, 379]];
  var bb = [[76, 338], [180, 322], [260, 325], [285, 325], [333, 313], [400, 297], [460, 303], [540, 303], [590, 298], [620, 318], [693, 345], [727, 355], [793, 380], [850, 390], [917, 398]];
  var mt = [[76, 260], [130, 262], [180, 262], [220, 282], [260, 293], [300, 293], [333, 262], [400, 240], [460, 275], [540, 292], [585, 288], [620, 318], [693, 345], [727, 360], [793, 385], [850, 395], [917, 405]];
  var mb = [[76, 290], [180, 278], [220, 290], [260, 295], [300, 295], [333, 272], [400, 263], [460, 282], [540, 300], [590, 300], [640, 340], [693, 385], [750, 432], [790, 445], [830, 459], [860, 445], [917, 420]];
  function family(top, bot, n, color, wl, wr) {
    for (var i = 0; i < n; i++) {
      var f = i / (n - 1), left = [], right = [];
      for (var x = 76; x <= 917; x += 6) {
        var q = [x, Math.round(lerp(curve(top, x), curve(bot, x), f))];
        if (x <= 598) left.push(q);
        if (x >= 592) right.push(q);
      }
      poly(p, left, color, wl);
      poly(p, right, color, wr);
    }
  }
  family(bt, bb, 6, "#0000f0", 1.3, 1);
  family(mt, mb, 5, "#ff00ff", 1.3, 1);

  var bars = [
    [78, 90, 267, 285, 272, 290, "#10d810"], [80, 90, 272, 280, 272, 280, "#e070d0"],
    [95, 138, 258, 270, 230, 258, "#f06010"], [116, 120, 262, 272, 262, 272, "#1880e0"], [138, 139, 222, 255, 222, 255, "#1880e0"],
    [140, 172, 248, 272, 245, 268, "#10d810"], [172, 178, 252, 264, 252, 264, "#f06010"], [178, 200, 275, 310, 285, 310, "#10d810"],
    [202, 246, 320, 360, 340, 362, "#10d810"], [232, 246, 335, 348, 335, 348, "#e070d0"], [258, 282, 320, 332, 298, 315, "#f06010"], [282, 307, 295, 305, 280, 300, "#f06010"],
    [308, 312, 215, 270, 180, 270, "#f06010"], [313, 335, 125, 172, 120, 170, "#f06010"], [335, 352, 170, 215, 175, 220, "#1880e0"],
    [337, 372, 205, 240, 208, 240, "#10d810"], [372, 380, 200, 225, 200, 225, "#f06010"], [378, 395, 212, 240, 212, 240, "#10d810"], [392, 402, 175, 215, 178, 215, "#f06010"],
    [403, 420, 225, 270, 225, 285, "#10d810"], [415, 432, 280, 325, 285, 335, "#10d810"], [432, 448, 320, 385, 340, 390, "#10d810"],
    [470, 472, 315, 365, 315, 365, "#e070d0"], [473, 506, 295, 330, 300, 335, "#f06010"], [490, 495, 325, 340, 325, 340, "#1880e0"], [510, 535, 318, 368, 335, 368, "#10d810"],
    [532, 534, 335, 375, 335, 375, "#e070d0"], [535, 541, 305, 365, 305, 365, "#f06010"], [542, 565, 265, 330, 265, 330, "#f06010"], [565, 580, 222, 285, 220, 280, "#f06010"],
    [580, 587, 245, 290, 245, 290, "#1880e0"], [587, 597, 278, 320, 280, 345, "#10d810"], [597, 612, 340, 400, 350, 420, "#10d810"], [610, 640, 375, 425, 392, 432, "#10d810"],
    [640, 680, 420, 455, 430, 460, "#10d810"], [680, 702, 460, 500, 470, 503, "#10d810"], [701, 703, 475, 490, 475, 490, "#e070d0"], [705, 745, 500, 522, 505, 525, "#10d810"],
    [735, 739, 495, 510, 495, 510, "#e070d0"], [740, 765, 488, 505, 482, 500, "#f06010"], [758, 760, 492, 502, 492, 502, "#1880e0"], [765, 800, 475, 490, 462, 480, "#f06010"], [800, 802, 470, 482, 470, 482, "#1880e0"],
    [802, 825, 482, 510, 490, 505, "#10d810"], [825, 835, 492, 500, 492, 500, "#e070d0"], [835, 850, 462, 490, 445, 465, "#f06010"], [850, 870, 385, 425, 382, 408, "#f06010"],
    [870, 885, 405, 420, 405, 420, "#1880e0"], [885, 897, 420, 450, 415, 445, "#10d810"], [897, 905, 398, 430, 395, 430, "#f06010"], [905, 915, 415, 430, 415, 430, "#1880e0"]
  ];
  bars.forEach(function (b) {
    var n = Math.max(1, Math.round((b[1] - b[0]) / 2));
    for (var i = 0; i <= n; i++) {
      var f = i / n, x = Math.round(lerp(b[0], b[1], f));
      var t = lerp(b[2], b[4], f), e = lerp(b[3], b[5], f), h = e - t;
      var len = h * (0.5 + 0.5 * rnd()), top = t + (h - len) * rnd();
      el(p, "rect", { x: x, y: Math.round(top), width: rnd() < 0.6 ? 1 : 2, height: Math.round(len), fill: b[6] });
    }
  });

  poly(p, [[78, 290], [100, 275], [125, 262], [145, 250], [165, 258], [185, 270], [200, 300], [215, 340], [235, 345], [258, 345], [280, 320], [300, 300], [312, 240], [325, 170], [335, 165], [350, 215], [365, 225], [385, 220], [400, 200], [415, 245], [440, 340], [460, 370], [480, 330], [500, 320], [520, 330], [530, 345], [545, 300], [565, 270], [585, 250], [600, 280], [615, 355], [630, 390], [650, 425], [680, 440], [700, 490], [720, 505], [735, 515], [755, 510], [780, 485], [800, 465], [815, 485], [835, 500], [850, 460], [865, 410], [880, 405], [895, 430]], "#ffff00", 1);
  poly(p, [[78, 290], [95, 285], [125, 275], [140, 245], [165, 255], [200, 285], [225, 335], [255, 340], [280, 330], [305, 305], [325, 240], [350, 200], [375, 190], [395, 210], [430, 270], [445, 330], [455, 340], [490, 335], [510, 325], [530, 340], [545, 320], [565, 290], [590, 283], [610, 300], [625, 330], [640, 385], [655, 400], [680, 440], [710, 480], [740, 490], [750, 500], [760, 502], [780, 498], [800, 480], [820, 480], [840, 478], [860, 460], [885, 435], [905, 430]], "#20e020", 1);
  poly(p, [[78, 275], [85, 285], [95, 270], [105, 263], [120, 255], [135, 240], [140, 245], [155, 252], [165, 260], [175, 265], [185, 275], [195, 285], [205, 310], [215, 340], [230, 348], [245, 345], [255, 340], [265, 325], [280, 310], [295, 295], [305, 270], [315, 180], [325, 140], [335, 150], [340, 190], [345, 205], [355, 215], [362, 218], [375, 215], [385, 220], [392, 190], [405, 215], [415, 255], [430, 295], [445, 345], [455, 365], [465, 370], [472, 310], [490, 310], [500, 300], [510, 320], [520, 355], [530, 365], [540, 320], [555, 280], [570, 240], [580, 240], [590, 270], [600, 300], [610, 350], [620, 370], [635, 395], [650, 420], [660, 440], [675, 435], [685, 465], [695, 490], [715, 510], [730, 518], [740, 500], [760, 490], [775, 480], [800, 468], [810, 480], [820, 495], [835, 490], [845, 470], [855, 430], [865, 395], [875, 410], [885, 420], [895, 430], [905, 415]], "#ffffff", 1);

  poly(p, [[76, 252], [95, 258], [130, 258], [175, 258], [200, 265], [215, 280]], "#ffff00", 2);
  poly(p, [[215, 280], [235, 300], [255, 312], [285, 312], [300, 305], [315, 290], [325, 270], [345, 250], [365, 240], [385, 232], [400, 228], [415, 235], [430, 255], [445, 275], [460, 290], [480, 300], [500, 300], [525, 303], [540, 310], [550, 315], [565, 310], [580, 298], [595, 290], [600, 292], [610, 307]], "#ffff00", 3);
  poly(p, [[610, 307], [630, 330], [660, 360], [690, 395], [727, 440], [745, 452]], "#ffff00", 3.4, "5 1");
  poly(p, [[745, 452], [760, 462], [793, 465], [830, 477], [850, 472], [867, 455], [887, 445], [913, 437]], "#ffff00", 3);

  [[120, 118], [209, 118], [313, 118], [316, 118], [464, 118], [533, 118], [536, 118], [553, 118], [562, 118], [578, 118], [617, 118], [630, 118], [642, 118], [711, 118], [765, 118], [807, 118], [834, 118], [843, 118], [853, 118], [863, 118], [911, 118]].forEach(function (s) {
    el(p, "path", { d: "M" + (s[0] - 3) + " " + s[1] + "h7M" + s[0] + ".5 " + (s[1] - 3) + "v7", stroke: "#fff", "stroke-width": 2, fill: "none" });
  });
  [[143, 227], [182, 263], [337, 152], [382, 205], [408, 221], [515, 302], [585, 244], [658, 425], [687, 459], [715, 503], [804, 466], [875, 408], [909, 401]].forEach(function (m) {
    el(p, "circle", { cx: m[0], cy: m[1], r: 4, fill: "none", stroke: "#fff", style: "shape-rendering:auto" });
    el(p, "circle", { cx: m[0], cy: m[1], r: 1.8, fill: "none", stroke: "#fff", style: "shape-rendering:auto" });
  });
  [[177, 272], [380, 232], [396, 233], [230, 364], [463, 387], [540, 372], [638, 407], [665, 441], [706, 495], [727, 527], [835, 499], [907, 428]].forEach(function (d) {
    el(p, "path", { d: "M" + d[0] + " " + (d[1] - 5) + "l5 5-5 5-5-5z", fill: "#ff00ff" });
  });
  el(p, "text", { x: 328, y: 123, fill: "#b0d0c8", "class": "lbl" }, "←14.50");
  el(p, "text", { x: 733, y: 532, fill: "#c0c0c0", "class": "lbl" }, "—3.25");
  el(p, "path", { d: "M558 531l6-4v8z", fill: "#ff00ff" });

  /* ---------- indicator panel ---------- */
  var s = document.getElementById("ind");
  var defs = el(s, "defs", {});
  var g = el(defs, "linearGradient", { id: "ig", x1: 0, y1: 0, x2: 0, y2: 1 });
  el(g, "stop", { offset: 0, "stop-color": "#0000ff" });
  el(g, "stop", { offset: 1, "stop-color": "#00004a" });
  el(s, "rect", { x: 76, y: 547, width: 841, height: 146, fill: "url(#ig)" });
  function dash(y, c, a) { el(s, "path", { d: "M76 " + y + ".5H917", stroke: c, "stroke-dasharray": a, fill: "none" }); }
  dash(612, "#e0e0e0", "4 3"); dash(687, "#9090a0", "4 3"); dash(706, "#00ff00", "4 2"); dash(725, "#800080", "3 2"); dash(649, "#00c080", "1 2");

  poly(s, [[77, 649], [208, 649], [208, 695], [230, 695], [232, 649], [421, 649], [422, 695], [468, 695], [468, 649], [604, 649], [604, 695], [632, 695]], "#ffff00", 2);
  poly(s, [[676, 680], [676, 649], [690, 649], [690, 695], [734, 695], [734, 649], [917, 649]], "#ffff00", 2);
  [100, 176, 235, 276, 319, 527, 703, 762, 790, 843, 880].forEach(function (x) { el(s, "rect", { x: x, y: 630, width: 2, height: 19, fill: "#e01010" }); });
  [278, 301, 319, 331, 510, 570, 645, 725, 781].forEach(function (x) { el(s, "rect", { x: x, y: 650, width: 2, height: 19, fill: "#10e040" }); });

  var z = [[232, 295], [240, 275], [250, 380], [258, 345], [265, 435], [275, 435], [285, 325], [295, 210], [307, 100], [320, 200], [335, 175], [345, 345], [357, 345], [375, 120], [382, 190], [395, 115], [410, 245], [418, 350], [425, 435], [440, 425], [450, 345], [465, 425], [480, 405], [490, 450], [505, 345], [520, 270], [530, 470], [540, 635], [548, 540], [560, 415], [575, 420], [590, 440], [605, 575], [620, 480], [630, 405], [640, 430], [658, 380], [680, 415], [696, 205], [708, 365], [725, 170], [737, 465], [748, 400], [760, 205], [772, 270], [782, 140], [800, 190], [812, 155], [830, 210], [850, 200], [855, 240], [875, 230], [880, 140], [900, 180], [907, 290], [928, 25], [950, 180], [970, 240], [985, 245], [1000, 310], [1010, 455], [1028, 385], [1040, 415], [1052, 410], [1066, 490], [1075, 385], [1090, 370], [1100, 400], [1112, 265], [1120, 295], [1128, 265], [1135, 350], [1145, 495], [1165, 340], [1180, 165], [1195, 205], [1210, 400], [1222, 395], [1232, 455], [1250, 580], [1262, 430], [1280, 400], [1295, 430], [1305, 425], [1318, 545], [1335, 405], [1350, 430], [1360, 395], [1380, 340]];
  var anchors = z.map(function (q) { return [q[0] / 3, 540 + q[1] / 3]; }).concat([[465, 620], [472, 548], [478, 590], [485, 640], [492, 615], [498, 600], [505, 640], [512, 670], [520, 700], [527, 650], [533, 610], [540, 680], [545, 620], [552, 590], [560, 640], [566, 610], [572, 585], [578, 640], [585, 690], [592, 725], [600, 685], [608, 690], [615, 705], [625, 675], [635, 685], [645, 660], [652, 600], [660, 680], [668, 650], [680, 670], [695, 700], [708, 640], [720, 700], [735, 590], [745, 570], [752, 600], [762, 640], [775, 660], [790, 600], [800, 625], [812, 680], [822, 620], [835, 553], [845, 640], [855, 570], [865, 660], [875, 700], [885, 730], [893, 670], [900, 620], [907, 650], [913, 660]]);
  var line = [];
  for (var i = 0; i < anchors.length; i++) {
    line.push(anchors[i]);
    if (i + 1 < anchors.length && anchors[i][0] >= 460) {
      var a = anchors[i], b = anchors[i + 1], m = Math.floor((b[0] - a[0]) / 3);
      for (var j = 1; j < m; j++) {
        line.push([lerp(a[0], b[0], j / m), lerp(a[1], b[1], j / m) + (rnd() - 0.5) * 7]);
      }
    }
  }
  poly(s, line, "#ff00ff", 2);
})();
```
